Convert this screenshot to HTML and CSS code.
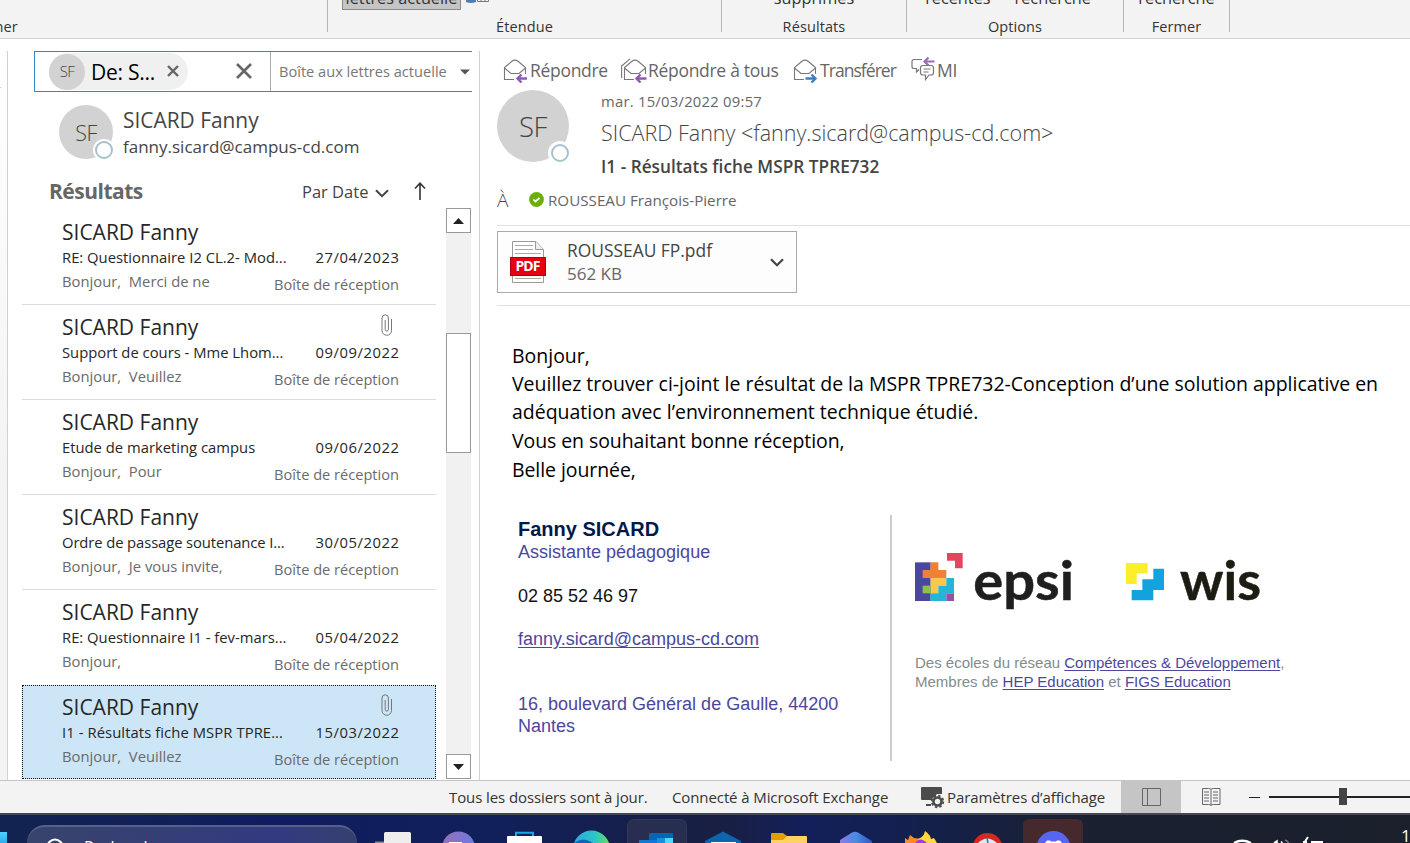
FILE: index.html
```html
<!DOCTYPE html>
<html lang="fr">
<head>
<meta charset="utf-8">
<title>Résultats - Outlook</title>
<link rel="stylesheet" href="styles.css">
</head>
<body>
<svg class="defs" width="0" height="0">
  <symbol id="clip" viewBox="0 0 12 22"><path d="M10.500 5v11.500a4.750 4.750 0 0 1-9.500 0V4a3.200 3.200 0 0 1 6.400 0v11.500a1.600 1.600 0 0 1-3.200 0V6" fill="none" stroke="#777" stroke-width="1"/></symbol>
  <symbol id="envelope" viewBox="0 0 26 26"><path d="M12 22.500H2.500V10.500L10 4.300q3-2.300 6 0l7.500 6.200V17M2.500 11l6.500 5.500h8l6.500-5.500" fill="none" stroke="#777" stroke-width="1.100"/></symbol>
</svg>
<div class="app">
  <header class="ribbon">
    <div class="group g-nav"><span class="group-label">mer</span></div>
    <div class="group g-scope"><div class="cmds"><span class="toggle">lettres actuelle</span><svg width="24" height="6" viewBox="0 0 24 6"><path d="M0 0h10v2q-5 2-10 0z" fill="#4a7ebb"/><path d="M11.500 0v1.500h11V0M15 0v1.500M19 0v1.500" fill="none" stroke="#777"/></svg></div><span class="group-label">Étendue</span></div>
    <div class="group g-results"><div class="cmds"><span class="cmd">supprimés</span></div><span class="group-label">Résultats</span></div>
    <div class="group g-options"><div class="cmds two"><span class="cmd">récentes</span><span class="cmd">recherche</span></div><span class="group-label">Options</span></div>
    <div class="group g-close"><div class="cmds"><span class="cmd">recherche</span></div><span class="group-label">Fermer</span></div>
  </header>

  <main class="panes">
    <div class="rail"><i></i></div>
    <section class="list-pane">
      <div class="search">
        <span class="chip"><span class="avatar tiny">SF</span><span class="chip-text">De: S...</span><svg width="12" height="12" viewBox="0 0 12 12"><path d="M1 1l10 10M11 1L1 11" stroke="#666" stroke-width="2.400"/></svg></span>
        <svg class="clear" width="16" height="16" viewBox="0 0 16 16"><path d="M1 1l14 14M15 1L1 15" stroke="#666" stroke-width="2.600"/></svg>
        <span class="scope">Boîte aux lettres actuelle</span>
        <svg class="drop" width="10" height="6" viewBox="0 0 10 6"><path d="M0 .5h10L5 5.500z" fill="#555"/></svg>
      </div>
      <div class="person">
        <span class="avatar small">SF<i class="presence"></i></span>
        <div><div class="person-name">SICARD Fanny</div><div class="person-mail">fanny.sicard@campus-cd.com</div></div>
      </div>
      <div class="sortbar">
        <h2>Résultats</h2>
        <span class="sort">Par Date</span>
        <svg class="chev" width="14" height="9" viewBox="0 0 14 9"><path d="M1 1.200l6 6 6-6" fill="none" stroke="#444" stroke-width="2"/></svg>
        <svg class="up" width="12" height="18" viewBox="0 0 12 18"><path d="M6 18V1.500M1 6.500l5-5.300 5 5.300" fill="none" stroke="#333" stroke-width="1.600"/></svg>
      </div>
      <div class="results">
        <div class="mails">
          <article class="mail"><div class="from">SICARD Fanny</div><div class="line"><span>RE: Questionnaire I2 CL.2- Mod...</span><time>27/04/2023</time></div><div class="line sub"><span>Bonjour,&nbsp; Merci de ne</span><span class="box">Boîte de réception</span></div></article>
          <article class="mail"><div class="from">SICARD Fanny<svg class="clip" width="12" height="22"><use href="#clip"/></svg></div><div class="line"><span>Support de cours - Mme Lhom...</span><time>09/09/2022</time></div><div class="line sub"><span>Bonjour,&nbsp; Veuillez</span><span class="box">Boîte de réception</span></div></article>
          <article class="mail"><div class="from">SICARD Fanny</div><div class="line"><span>Etude de marketing campus</span><time>09/06/2022</time></div><div class="line sub"><span>Bonjour,&nbsp; Pour</span><span class="box">Boîte de réception</span></div></article>
          <article class="mail"><div class="from">SICARD Fanny</div><div class="line"><span class="tight">Ordre de passage soutenance I...</span><time>30/05/2022</time></div><div class="line sub"><span>Bonjour,&nbsp; Je vous invite,</span><span class="box">Boîte de réception</span></div></article>
          <article class="mail last"><div class="from">SICARD Fanny</div><div class="line"><span>RE: Questionnaire I1 - fev-mars...</span><time>05/04/2022</time></div><div class="line sub"><span>Bonjour,</span><span class="box">Boîte de réception</span></div></article>
          <article class="mail selected"><div class="from">SICARD Fanny<svg class="clip" width="12" height="22"><use href="#clip"/></svg></div><div class="line"><span class="loose">I1 - Résultats fiche MSPR TPRE...</span><time>15/03/2022</time></div><div class="line sub"><span>Bonjour,&nbsp; Veuillez</span><span class="box">Boîte de réception</span></div></article>
        </div>
        <div class="scrollbar">
          <span class="sb-btn"><svg width="11" height="6" viewBox="0 0 11 6"><path d="M0 6L5.500 0 11 6z" fill="#222"/></svg></span>
          <span class="thumb"></span>
          <span class="sb-btn"><svg width="11" height="6" viewBox="0 0 11 6"><path d="M0 0h11L5.500 6z" fill="#222"/></svg></span>
        </div>
      </div>
    </section>

    <section class="reader">
      <div class="actions">
        <span class="action a1"><svg width="26" height="26" viewBox="0 0 26 26"><use href="#envelope"/><path d="M25 21.500H15M19.500 17.500L15.500 21.500l4 4" fill="none" stroke="#8d5bb0" stroke-width="2.400"/></svg>Répondre</span>
        <span class="action a2"><svg width="26" height="26" viewBox="0 0 26 26"><path d="M.6 21V9L9 1.800" fill="none" stroke="#777" stroke-width="1.100"/><use href="#envelope" x="1"/><path d="M25.500 21.500H15M19.500 17.500L15.500 21.500l4 4" fill="none" stroke="#8d5bb0" stroke-width="2.400"/></svg>Répondre à tous</span>
        <span class="action a3"><svg width="26" height="26" viewBox="0 0 26 26"><use href="#envelope"/><path d="M13.500 21.500H23M19.500 17.500l4 4-4 4" fill="none" stroke="#3f7fbf" stroke-width="2.400"/></svg>Transférer</span>
        <span class="action a4"><svg width="26" height="26" viewBox="0 0 26 26"><path d="M11 3.500H3a2 2 0 0 0-2 2v5a2 2 0 0 0 2 2h2.500v3.500l2.500-2.500M12 9.500h8a2.500 2.500 0 0 1 2.500 2.500v4.500A2.500 2.500 0 0 1 20 19h-2l-3.500 4.500V19H12a2.500 2.500 0 0 1-2.500-2.500V12q0-2.500 2.500-2.500M12.500 13h7M12.500 16h5" fill="none" stroke="#777" stroke-width="1.200"/><path d="M23.500 5.500H14M17.500 1.500L13.500 5.500l4 4" fill="none" stroke="#9a6cba" stroke-width="2.200"/></svg>MI</span>
      </div>
      <div class="head">
        <span class="avatar large">SF<i class="presence"></i></span>
        <div class="head-text">
          <div class="date">mar. 15/03/2022 09:57</div>
          <div class="sender">SICARD Fanny &lt;fanny.sicard@campus-cd.com&gt;</div>
          <div class="subject">I1 - Résultats fiche MSPR TPRE732</div>
        </div>
      </div>
      <div class="to"><span class="to-label">À</span><svg width="15" height="15" viewBox="0 0 15 15"><circle cx="7.500" cy="7.500" r="7.400" fill="#6bb00a"/><path d="M4.500 7.500l2 2L10.500 6" fill="none" stroke="#fff" stroke-width="1.700"/></svg><span class="to-name">ROUSSEAU François-Pierre</span></div>
      <div class="attachments">
        <div class="file">
          <svg width="36" height="43" viewBox="0 0 36 43"><path d="M2.500 .5H26l7.500 8v33h-31z" fill="#fff" stroke="#999"/><path d="M25.500 .5v8h8" fill="#eee" stroke="#999"/><path d="M5 4.500h18M5 8.500h18M5 12.500h26M5 37.500h26" stroke="#aaa"/><rect x=".5" y="16.500" width="35" height="18" fill="#e60012" stroke="#b3000e"/><text x="18" y="30.300" text-anchor="middle" textLength="25" class="pdf">PDF</text></svg>
          <div class="file-text"><div class="file-name">ROUSSEAU FP.pdf</div><div class="file-size">562 KB</div></div>
          <svg class="more" width="14" height="9" viewBox="0 0 14 9"><path d="M1 1.200l6 6 6-6" fill="none" stroke="#444" stroke-width="2.200"/></svg>
        </div>
      </div>
      <div class="body">
        <p>Bonjour,</p>
        <p>Veuillez trouver ci-joint le résultat de la MSPR TPRE732-Conception d’une solution applicative en</p>
        <p>adéquation avec l’environnement technique étudié.</p>
        <p class="wide">Vous en souhaitant bonne réception,</p>
        <p class="wide">Belle journée,</p>
      </div>
      <div class="signature">
        <div class="card">
          <div class="sig-name">Fanny SICARD</div>
          <div class="sig-role">Assistante pédagogique</div>
          <div class="sig-tel">02 85 52 46 97</div>
          <a class="sig-mail">fanny.sicard@campus-cd.com</a>
          <div class="sig-addr">16, boulevard Général de Gaulle, 44200<br>Nantes</div>
        </div>
        <div class="schools">
          <svg width="350" height="62" viewBox="45 60 1050 186">
            <path d="M45 97h47v116H45z" fill="#4b479d"/><path d="M92 97h23v23h24v24H68v-24h24z" fill="#f08038"/>
            <path d="M92 144h47v23h-24v23H92z" fill="#fcc84a"/><path d="M68 167h24v23H68z" fill="#8bc34a"/>
            <path d="M139 144h23v46h-23v23H92v-23h23v-23h24z" fill="#25b5d8"/><path d="M139 190h23v23h-23z" fill="#9254a5"/>
            <path d="M141 69h47v46h-23V92h-24z" fill="#e5455c"/>
            <path d="M678 99h65v31h-33v32h-32z" fill="#fdee2c"/><path d="M760 116h32v64h-32v31h-65v-31h32v-32h33z" fill="#12a3df"/>
            <text x="220" y="210" textLength="302" lengthAdjust="spacingAndGlyphs" class="brand dark">epsi</text>
            <text x="840" y="209" textLength="243" lengthAdjust="spacingAndGlyphs" class="brand olive">wis</text>
          </svg>
          <div class="network">Des écoles du réseau <a>Compétences &amp; Développement</a>,<br>Membres de <a>HEP Education</a> et <a>FIGS Education</a></div>
        </div>
      </div>
    </section>
  </main>

  <footer class="status">
    <span class="st1">Tous les dossiers sont à jour.</span>
    <span class="st2">Connecté à Microsoft Exchange</span>
    <svg class="gear" width="24" height="23" viewBox="0 0 24 23"><path d="M1 1h19a1 1 0 0 1 1 1v6h-5l-6 6H1a1 1 0 0 1-1-1V2a1 1 0 0 1 1-1zM5 18h5v2H5z" fill="#4b4b4b"/><circle cx="16.500" cy="15.500" r="4" fill="none" stroke="#4b4b4b" stroke-width="2.600"/><circle cx="16.500" cy="15.500" r="5.800" fill="none" stroke="#4b4b4b" stroke-width="1.800" stroke-dasharray="2.400 2.155"/></svg>
    <span class="st3">Paramètres d’affichage</span>
    <span class="view on"><svg width="20" height="19" viewBox="0 0 20 19"><path d="M1.500.5h18v17h-18zM6.500.5v17" fill="none" stroke="#666"/></svg></span>
    <span class="view"><svg width="20" height="19" viewBox="0 0 20 19"><path d="M1.500.5h6q2 0 2.500 1 .5-1 2.500-1h6.500v16h-6.500q-2 0-2.500 1-.5-1-2.500-1h-6zM10 1.500v16M3 4h5M3 7h5M3 10h5M3 13h5M12 4h5M12 7h5M12 10h5M12 13h5" fill="none" stroke="#666"/></svg></span>
    <span class="minus"></span>
    <span class="zoom"><i></i></span>
  </footer>

  <nav class="taskbar">
    <span class="start"></span>
    <div class="tb-search"><svg width="20" height="20" viewBox="0 0 20 20"><circle cx="10" cy="9" r="7.500" fill="none" stroke="#fff" stroke-width="2.200"/></svg><span>Rechercher</span></div>
    <div class="apps">
      <svg viewBox="0 0 60 28"><path d="M12 26.500h27V28H12z" fill="#8b8a86"/><rect x="21" y="17" width="27" height="14" rx="1.500" fill="#eee"/></svg>
      <svg viewBox="0 0 60 28"><defs><linearGradient id="gc"><stop stop-color="#9a6fb5"/><stop offset="1" stop-color="#6a7be0"/></linearGradient></defs><circle cx="29.500" cy="33" r="16.500" fill="url(#gc)"/><path d="M20 27h13v1H20z" fill="#fff"/></svg>
      <svg viewBox="0 0 60 28"><path d="M21 22v-4.200h17V22" fill="none" stroke="#19a8e8" stroke-width="2"/><rect x="12" y="21" width="35" height="12" rx="1" fill="#fff"/></svg>
      <svg viewBox="0 0 60 28"><defs><linearGradient id="ge"><stop stop-color="#2aa8e0"/><stop offset=".6" stop-color="#2cc5c8"/><stop offset="1" stop-color="#6be052"/></linearGradient></defs><circle cx="30.500" cy="34" r="18.500" fill="url(#ge)"/><path d="M13 28q9-7 19 0z" fill="#0b67b5"/></svg>
      <svg viewBox="0 0 60 28"><rect x=".5" y="4.500" width="59" height="40" rx="6" fill="#282e50" stroke="#333959"/><path d="M22 19q0-1 1-1h22q1 0 1 1v9H22z" fill="#0a64b4"/><path d="M30 23h8v5h-8z" fill="#1490df"/><path d="M38 23h8v5h-8z" fill="#50d9ff"/><path d="M12 25h18v3H12z" fill="#0f78d0"/></svg>
      <svg viewBox="0 0 60 28"><path d="M12 28v-2l18-9.500L48 26v2z" fill="#0f64ae"/><path d="M18 27h25v1H18z" fill="#fff"/></svg>
      <svg viewBox="0 0 60 28"><path d="M12 19q0-1 1-1h11l4 3v5H12z" fill="#e0a000"/><path d="M12 25h12l4-4h19q1 0 1 1v6H12z" fill="#ffd35e"/></svg>
      <svg viewBox="0 0 60 28"><defs><linearGradient id="gm"><stop stop-color="#8c7be8"/><stop offset=".5" stop-color="#4a8be0"/><stop offset="1" stop-color="#3155c4"/></linearGradient></defs><path d="M15 28v-3l12-7.500q3-1.500 6 0L47 26v2z" fill="url(#gm)"/></svg>
      <svg viewBox="0 0 60 28"><path d="M14 28v-5l3 2 2-5 4 3 7 1 4 4z" fill="#ff8a2a"/><path d="M27 24q6-2 7-8 3 2 5 5l1 3 3-1 3 5H30z" fill="#ffd83d"/><path d="M24 28q5-7 12 0z" fill="#a03be8"/></svg>
      <svg viewBox="0 0 60 28"><circle cx="30.500" cy="33" r="15" fill="#d8271c"/><path d="M21 28q9-9 19 0z" fill="#dfe8ee"/><path d="M30 23l1 5" stroke="#1d7db5" stroke-width="1.500"/></svg>
      <svg viewBox="0 0 60 28"><rect y="4" width="60" height="40" rx="6" fill="#46292d"/><circle cx="30.500" cy="33" r="17" fill="#5865f2"/><path d="M22 28l2-2.500h3l1 1h5l1-1h3l2 2.500z" fill="#fff"/></svg>
    </div>
    <svg class="tray" width="92" height="28" viewBox="0 0 92 28"><path d="M2 28q8-4.500 17 0" fill="none" stroke="#fff" stroke-width="2.400"/><path d="M42 28l3-2v2M49 26.500l1.500 1.500" stroke="#fff" stroke-width="1.600" fill="none"/><path d="M53 25q3 1 3.500 3" stroke="#777" stroke-width="1.500" fill="none"/><path d="M76 22l-4 6M71 27h4M79 27h12" stroke="#fff" stroke-width="2" fill="none"/></svg>
    <span class="clock">1</span>
  </nav>
</div>
</body>
</html>
```
FILE: styles.css
```css
* { box-sizing: border-box; }
body { margin: 0; width: 1410px; height: 843px; overflow: hidden; background: #fff; font-family: "Open Sans", "Noto Sans", sans-serif; color: #444; }
p, h2 { margin: 0; }
svg { display: block; flex: none; }
i { display: block; }
.defs { position: absolute; }
.app { display: flex; flex-direction: column; width: 1410px; height: 843px; }

/* Ribbon */
.ribbon { display: flex; height: 39px; flex: none; background: #f3f3f3; border-bottom: 1px solid #d1d1d1; font-size: 14.5px; color: #333; white-space: nowrap; overflow: hidden; }
.group { display: flex; flex-direction: column; align-items: center; justify-content: flex-end; height: 32px; border-right: 1px solid #b5b5b5; }
.group-label { line-height: 20px; height: 16px; display: flex; align-items: center; margin-bottom: -3px; letter-spacing: .1px; }
.g-nav { width: 328px; align-items: flex-start; }
.g-nav .group-label { margin-left: -10px; }
.g-scope { width: 394px; }
.g-results { width: 185px; }
.g-options { width: 217px; }
.g-close { width: 106px; }
.cmds { display: flex; align-items: flex-end; height: 11px; margin-bottom: 8px; font-size: 16.300px; }
.cmd { line-height: 20px; margin-bottom: 3px; }
.two { gap: 24px; margin-right: 14px; }
.toggle { width: 119px; height: 30px; line-height: 35px; text-align: center; background: #c5c5c5; border: 1px solid #8a8a8a; margin-bottom: 1px; }
.g-scope .cmds { align-self: flex-start; margin-left: 14px; gap: 5px; }
.g-scope .cmds svg { margin-bottom: 5px; }

/* Panes */
.panes { display: flex; flex: none; height: 741px; }
.rail { width: 8px; margin-top: 12px; background: linear-gradient(#fff, #f3f3f3 60%); border-right: 1px solid #d1d1d1; }
.rail i { width: 1px; height: 1px; background: #ccc; margin-top: 36px; }
.list-pane { width: 472px; margin-top: 12px; border-right: 1px solid #d1d1d1; }
.search { display: flex; align-items: center; width: 438px; height: 41px; margin-left: 26px; border: 1px solid #2b88d0; border-right: 0; white-space: nowrap; }
.chip { display: flex; align-items: center; width: 139px; height: 37px; margin-left: 14px; border-radius: 19px; background: #f0f0f0; }
.chip svg { margin-top: -1px; }
.chip-text { width: 70px; margin: 1px 6px 0 6px; font-size: 21px; letter-spacing: -.25px; color: #000; }
.clear { margin: -1px 18px 0 48px; }
.scope { height: 39px; line-height: 39px; padding-left: 8px; border-left: 1px solid #aaa; font-size: 14.600px; color: #777; width: 190px; }
.avatar { display: flex; align-items: center; justify-content: center; flex: none; position: relative; border-radius: 50%; background: #d2d2d2; color: #444; letter-spacing: -.5px; }
.tiny { width: 36px; height: 36px; font-size: 15px; font-weight: 300; padding-bottom: 2px; }
.small { width: 54px; height: 54px; font-size: 21.500px; font-weight: 300; }
.large { width: 72px; height: 72px; font-size: 27.500px; font-weight: 300; }
.presence { position: absolute; right: 0; bottom: 0; width: 18px; height: 18px; border: 2px solid #a5c3ce; border-radius: 50%; background: #fff; box-shadow: 0 0 0 3px #fff; }
.small .presence { box-shadow: 0 0 0 2px #fff; }
.person { display: flex; gap: 10px; height: 54px; margin: 13px 0 0 51px; }
.person-name { font-size: 20.900px; line-height: 31px; color: #444; }
.person-mail { font-size: 17px; line-height: 22px; color: #444; }
.sortbar { display: flex; align-items: center; height: 34px; margin: 15px 0 0 41px; }
.sortbar h2 { width: 253px; font-size: 21px; font-weight: 700; letter-spacing: -.5px; color: #666; }
.sort { width: 67px; font-size: 16.500px; white-space: nowrap; }
.chev { margin: 4px 25px 0 6px; }
.results { display: flex; height: 572px; margin-left: 14px; }
.mails { width: 414px; padding-top: 2px; }
.mail { height: 95px; padding: 8px 37px 0 40px; border-bottom: 1px solid #dcdcdc; color: #262626; white-space: nowrap; }
.last { border-color: transparent; }
.selected { height: 94px; background: #cde6f7; outline: 1px dotted #111; outline-offset: -1px; border: 0; }
.from { display: flex; justify-content: space-between; height: 28px; line-height: 28px; font-size: 21px; }
.clip { margin: 1px 6px 0 0; }
.line { display: flex; justify-content: space-between; font-size: 14.800px; line-height: 23px; }
.line .tight { letter-spacing: -.1px; }
.line .loose { letter-spacing: .08px; }
time { margin-right: -.55px; letter-spacing: .55px; }
.sub { color: #6a6a6a; line-height: 24px; }
.box { padding-top: 3px; font-size: 14.600px; }
.scrollbar { display: flex; flex-direction: column; justify-content: space-between; width: 25px; height: 571px; margin-left: 10px; background: #f1f1f1; }
.sb-btn { display: flex; align-items: center; justify-content: center; width: 25px; height: 25px; border: 1px solid #999; background: #fff; }
.thumb { height: 120px; margin-bottom: 201px; border: 1px solid #999; background: #fff; }

/* Reading pane */
.reader { width: 930px; padding-left: 17px; white-space: nowrap; }
.actions { display: flex; height: 51px; padding-top: 17px; font-size: 17.500px; letter-spacing: -.3px; color: #666; }
.action { display: flex; align-items: center; flex: none; height: 28px; }
.a1 { width: 118px; padding-left: 5px; }
.a2 { width: 172px; padding-left: 6px; }
.a3 { width: 124px; padding-left: 5px; letter-spacing: -.95px; }
.a4 svg { margin-top: -2px; }
.action svg { margin-right: 2px; }
.a2 svg, .a4 svg { margin-right: 1px; }
.a4 svg { margin-right: 0; }
.head { display: flex; gap: 32px; height: 98px; }
.date { height: 24px; line-height: 23px; font-size: 14.800px; letter-spacing: .25px; color: #666; }
.sender { height: 38px; line-height: 38px; font-size: 21.500px; font-weight: 300; color: #444; }
.subject { height: 29px; line-height: 29px; font-size: 17.200px; font-weight: 600; letter-spacing: .03px; color: #444; }
.to { display: flex; align-items: center; height: 37px; padding-bottom: 13px; color: #666; font-size: 15.200px; }
.to-label { width: 32px; font-size: 19px; font-weight: 300; color: #444; }
.to svg { margin: -2px 4px 0 0; }
.attachments { height: 81px; padding-top: 5px; border-top: 1px solid #e1e1e1; border-bottom: 1px solid #e1e1e1; }
.file { display: flex; align-items: center; width: 300px; height: 62px; padding: 0 12px; border: 1px solid #aaa; background: #fdfdfd; }
.file-text { width: 203px; margin: 0 3px 0 21px; font-size: 17.400px; line-height: 24px; }
.file-size { color: #666; font-size: 17px; }
.more { margin: 1px 0 0; }
.pdf { font: 700 14px "Open Sans", sans-serif; fill: #fff; }
.body { height: 179px; padding: 36px 0 0 15px; font-size: 19.480px; color: #000; }
.body p { height: 28px; line-height: 28px; }
.body .wide { height: 29px; line-height: 30px; letter-spacing: -.07px; }
.signature { display: flex; margin-top: 30px; font-family: "Liberation Sans", Arial, sans-serif; }
.card { width: 395px; height: 246px; padding-left: 21px; border-right: 2px solid #ccc; color: #4b479d; font-size: 18px; }
.sig-name { font-size: 20px; font-weight: 700; line-height: 28px; height: 26px; color: #00184a; }
.sig-role { line-height: 22px; }
.sig-tel { margin-top: 22px; line-height: 22px; color: #111; }
.sig-mail { display: block; margin-top: 21px; line-height: 22px; text-decoration: underline; text-underline-offset: 2px; }
.sig-addr { margin-top: 43px; line-height: 22px; }
.schools { padding: 35px 0 0 23px; }
.brand { font: 700 162px Lato, sans-serif; stroke-width: 1.500px; stroke-linejoin: round; }
.dark { fill: #1f1f1f; stroke: #1f1f1f; }
.olive { fill: #1d1c12; stroke: #1d1c12; }
.network { margin-top: 41px; font-size: 15px; line-height: 19px; color: #7f8c8d; }
.network a { color: #4b479d; text-decoration: underline; text-underline-offset: 2px; }

/* Status bar */
.status { display: flex; align-items: center; flex: none; height: 33px; background: #f3f3f3; border-top: 1px solid #c6c6c6; font-size: 15px; letter-spacing: -.1px; color: #333; white-space: nowrap; }
.st1 { width: 223px; margin-left: 449px; }
.st2 { width: 249px; }
.gear { margin-right: 2px; }
.st3 { width: 174px; }
.view { display: flex; align-items: center; justify-content: center; width: 60px; height: 32px; }
.on { background: #c5c5c5; }
.minus { width: 11px; height: 1px; margin: 0 9px 0 8px; background: #222; }
.zoom { flex: 1; height: 2px; background: #222; }
.zoom i { width: 8px; height: 17px; margin: -8px 0 0 70px; background: #444; }

/* Taskbar */
.taskbar { display: flex; flex: none; height: 30px; overflow: hidden; border-top: 2px solid #434853; background: linear-gradient(90deg, #122350, #101c60 20%, #11205a 35%, #191f42 51%, #131f5a 57%, #13204f 64%, #1b2032 76%, #1b202c); color: #fff; }
.start { flex: none; width: 7px; height: 11px; margin-top: 17px; background: linear-gradient(#4fd0ff, #2dabf0); }
.tb-search { display: flex; flex: none; gap: 19px; width: 330px; height: 36px; margin: 10px 6px 0 20px; padding: 11px 0 0 18px; border-radius: 18px; border-top: 2px solid #566089; background: linear-gradient(90deg, #38446b, #333a80 75%, #36406f); font-size: 16px; line-height: 18px; }
.apps { display: flex; flex: none; gap: 6px; }
.apps svg { width: 60px; height: 28px; }
.tray { margin-left: 149px; }
.clock { margin: 12px 0 0 77px; font-size: 17px; line-height: 18px; white-space: nowrap; }
```
